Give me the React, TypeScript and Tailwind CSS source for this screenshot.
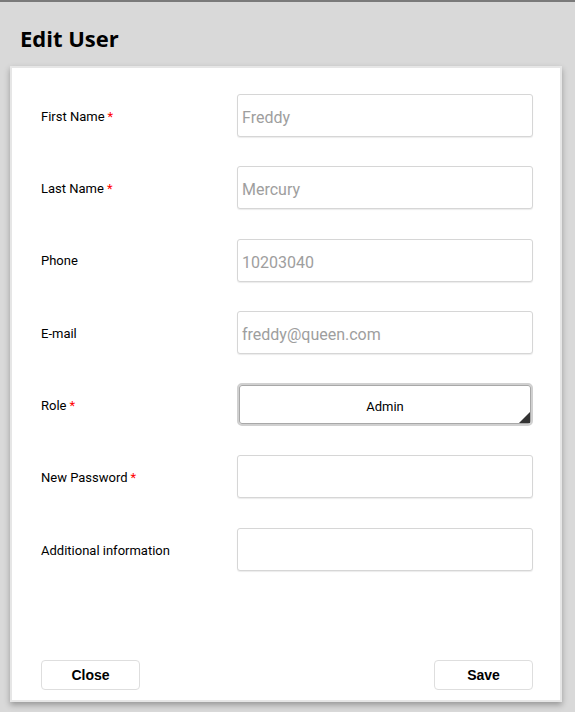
import React from "react";

const rows: { label: string; required?: boolean; placeholder?: string; select?: boolean }[] = [
  { label: "First Name", required: true, placeholder: "Freddy" },
  { label: "Last Name", required: true, placeholder: "Mercury" },
  { label: "Phone", placeholder: "10203040" },
  { label: "E-mail", placeholder: "freddy@queen.com" },
  { label: "Role", required: true, select: true },
  { label: "New Password", required: true, placeholder: "" },
  { label: "Additional information", placeholder: "" },
];

export default function App() {
  return (
    <div className="w-[575px] h-[712px] bg-[#d9d9d9] border-t-2 border-[#7a7a7a] overflow-hidden flex flex-col">
      <h1 className="pl-[20px] pt-[21px] h-[64px] shrink-0 text-[22px] font-bold text-black leading-[30px] [font-family:'Open_Sans',sans-serif]">
        Edit User
      </h1>
      <div className="ml-[10px] w-[552px] h-[636px] shrink-0 bg-white border-2 border-[#e6e6e6] shadow-[0_3px_6px_rgba(0,0,0,0.3)] flex flex-col pl-[29px] pr-[27px] pt-[26px] pb-[10px] [font-family:Roboto,sans-serif]">
        <div className="flex flex-col gap-[29.3px]">
          {rows.map((r) => (
            <div key={r.label} className="flex items-center h-[43px]">
              <div className="w-[196px] pt-[2px] text-[13px] text-black">
                {r.label}
                {r.required && <span className="text-[#ff0000] ml-[3px]">*</span>}
              </div>
              {r.select ? (
                <div className="relative w-[296px] h-[43px] rounded-[5px] border-2 border-[#d0d0d0] bg-white flex items-center justify-center pt-[4px] text-[13px] text-black shadow-[inset_0_0_0_1px_#a8a8a8]">
                  Admin
                  <div className="absolute right-[1px] bottom-[1px] w-0 h-0 border-l-[11px] border-l-transparent border-b-[11px] border-b-[#333333]" />
                </div>
              ) : (
                <div className="w-[296px] h-[43px] rounded-[3px] border border-[#d6d6d6] shadow-[0_1px_1px_rgba(0,0,0,0.08)] bg-white flex items-center pl-[4px] pt-[5px] text-[16px] text-[#9e9e9e]">
                  {r.placeholder}
                </div>
              )}
            </div>
          ))}
        </div>
        <div className="mt-auto flex justify-between [font-family:'Liberation_Sans',Arial,sans-serif]">
          <button className="w-[99px] h-[30px] rounded-[4px] border border-[#dedede] bg-white text-[14px] font-bold text-black">
            Close
          </button>
          <button className="w-[99px] h-[30px] rounded-[4px] border border-[#dedede] bg-white text-[14px] font-bold text-black">
            Save
          </button>
        </div>
      </div>
    </div>
  );
}
